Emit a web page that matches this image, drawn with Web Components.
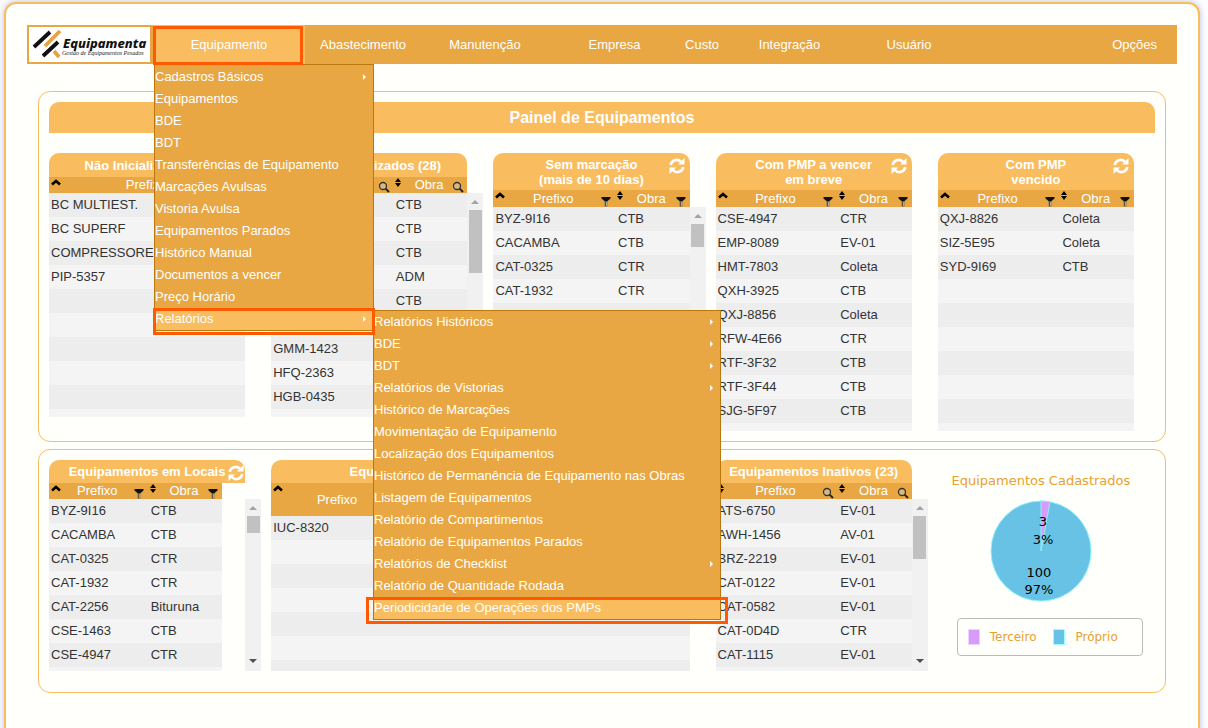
<!DOCTYPE html>
<html lang="pt-BR">
<head>
<meta charset="utf-8">
<title>Equipamenta - Painel de Equipamentos</title>
<style>
  html { height: 100%; overflow: hidden; background: #fdfdff; }
  body { margin: 0; height: 100%; font: 13px/16px "Liberation Sans", Arial, sans-serif; color: #333;
    --bar: #e8a743; --light: #f9bd60; --paper: #fffffb; --mark: #ff5a00; --edge: #ba770c; }
</style>
</head>
<body>
<app-frame>
  <main-menu slot="menu"></main-menu>
  <panel-box>
    <h1 slot="title">Painel de Equipamentos</h1>
    <data-grid source="naoInicializados"></data-grid>
    <data-grid source="naoSincronizados"></data-grid>
    <data-grid source="semMarcacao"></data-grid>
    <data-grid source="pmpAVencer"></data-grid>
    <data-grid source="pmpVencido"></data-grid>
  </panel-box>
  <panel-box class="lower">
    <data-grid source="emLocais"></data-grid>
    <data-grid source="permanencia" class="wide"></data-grid>
    <data-grid source="inativos"></data-grid>
    <pie-chart></pie-chart>
  </panel-box>
</app-frame>

<script>
const menus = {
  equipamento: [['Cadastros Básicos', 'more'], ['Equipamentos'], ['BDE'], ['BDT'], ['Transferências de Equipamento'],
    ['Marcações Avulsas'], ['Vistoria Avulsa'], ['Equipamentos Parados'], ['Histórico Manual'], ['Documentos a vencer'],
    ['Preço Horário'], ['Relatórios', 'more on open']],
  relatorios: [['Relatórios Históricos', 'more'], ['BDE', 'more'], ['BDT', 'more'], ['Relatórios de Vistorias', 'more'],
    ['Histórico de Marcações'], ['Movimentação de Equipamento'], ['Localização dos Equipamentos'],
    ['Histórico de Permanência de Equipamento nas Obras'], ['Listagem de Equipamentos'], ['Relatório de Compartimentos'],
    ['Relatório de Equipamentos Parados'], ['Relatórios de Checklist', 'more'], ['Relatório de Quantidade Rodada'],
    ['Periodicidade de Operações dos PMPs', 'on']]
};

const grids = {
  naoInicializados: { title: 'Não Inicializados (4)', icon: 'search', cols: [['Prefixo', 196]],
    rows: [['BC MULTIEST.'], ['BC SUPERF'], ['COMPRESSORE'], ['PIP-5357']] },
  naoSincronizados: { title: 'Não Sincronizados (28)', icon: 'search', cols: [['', 122], ['Obra', 74]], thumb: 63,
    rows: [['', 'CTB'], ['', 'CTB'], ['', 'CTB'], ['', 'ADM'], ['', 'CTB'], [], ['GMM-1423'], ['HFQ-2363'], ['HGB-0435']] },
  semMarcacao: { title: 'Sem marcação<br>(mais de 10 dias)', kind: 'tall', refresh: true, icon: 'filter', thumb: 23,
    cols: [['Prefixo', 122], ['Obra', 74]],
    rows: [['BYZ-9I16', 'CTB'], ['CACAMBA', 'CTB'], ['CAT-0325', 'CTR'], ['CAT-1932', 'CTR']] },
  pmpAVencer: { title: 'Com PMP a vencer<br>em breve', kind: 'tall', refresh: true, icon: 'filter',
    cols: [['Prefixo', 122], ['Obra', 74]],
    rows: [['CSE-4947', 'CTR'], ['EMP-8089', 'EV-01'], ['HMT-7803', 'Coleta'], ['QXH-3925', 'CTB'], ['QXJ-8856', 'Coleta'],
      ['RFW-4E66', 'CTR'], ['RTF-3F32', 'CTB'], ['RTF-3F44', 'CTB'], ['SJG-5F97', 'CTB']] },
  pmpVencido: { title: 'Com PMP<br>vencido', kind: 'tall', refresh: true, icon: 'filter',
    cols: [['Prefixo', 122], ['Obra', 74]],
    rows: [['QXJ-8826', 'Coleta'], ['SIZ-5E95', 'Coleta'], ['SYD-9I69', 'CTB']] },
  emLocais: { title: 'Equipamentos em Locais', kind: 'low', refresh: true, icon: 'filter', full: 196, thumb: 17,
    cols: [['Prefixo', 99], ['Obra', 74]],
    rows: [['BYZ-9I16', 'CTB'], ['CACAMBA', 'CTB'], ['CAT-0325', 'CTR'], ['CAT-1932', 'CTR'], ['CAT-2256', 'Bituruna'],
      ['CSE-1463', 'CTB'], ['CSE-4947', 'CTR']] },
  permanencia: { title: 'Equipamentos com Permanência a Vencer', kind: 'low', icon: 'filter',
    cols: [['Prefixo', 132], ['', 143], ['', 143]], rows: [['IUC-8320']] },
  inativos: { title: 'Equipamentos Inativos (23)', kind: 'low', icon: 'search', unsorted: true, thumb: 43,
    cols: [['Prefixo', 122], ['Obra', 74]],
    rows: [['ATS-6750', 'EV-01'], ['AWH-1456', 'AV-01'], ['BRZ-2219', 'EV-01'], ['CAT-0122', 'EV-01'], ['CAT-0582', 'EV-01'],
      ['CAT-0D4D', 'CTR'], ['CAT-1115', 'EV-01']] }
};

const define = (name, html, setup) => {
  const tpl = document.createElement('template');
  tpl.innerHTML = html;
  customElements.define(name, class extends HTMLElement {
    constructor() {
      super();
      this.attachShadow({ mode: 'open' }).append(tpl.content.cloneNode(true));
    }
    connectedCallback() { if (setup && !this.ready) { this.ready = true; setup(this, this.shadowRoot); } }
  });
};

const icons = {
  up: '<svg width="12" height="9" viewBox="0 0 12 9"><path d="M2 7.500 6 4l4 3.500" fill="none" stroke="#000" stroke-width="2.600"/></svg>',
  both: '<svg width="8" height="11" viewBox="0 0 8 11"><path d="M4 1 7 5H1zM4 10 1 6h6z"/></svg>',
  filter: '<svg width="12" height="12" viewBox="0 0 12 12"><path d="M1.500 2h9v1.500L7 6.500H5L1.500 3.500z" fill="#111"/><path d="M6 6v5.500" stroke="#555" stroke-width="2.600"/><path d="M6.500 7v4" stroke="#bbb" stroke-width=".8"/></svg>',
  search: '<svg width="12" height="12" viewBox="0 0 12 12"><circle cx="5" cy="5" r="3.500" fill="#d9b982" stroke="#333" stroke-width="1.300"/><path d="m7.600 7.600 3.400 3.400" stroke="#222" stroke-width="1.900"/></svg>',
  refresh: '<svg width="16" height="16" viewBox="0 0 16 16" fill="none" stroke="#fff" stroke-width="2.600"><path d="M1.700 7A6 6 0 0 1 12 3.800"/><path d="M14.300 9A6 6 0 0 1 4 12.200"/><path d="M15.500 0v6.500H9zM.5 16V9.500H7z" fill="#fff" stroke="none"/></svg>'
};

define('app-frame', `
<style>
  :host { display: block; padding: 2px 8px 0 4px; }
  .frame { box-sizing: border-box; min-height: 740px; padding: 21px 0; border: 2px solid var(--light);
    border-radius: 12px; background: var(--paper); box-shadow: 0 0 6px #b4bfd8; }
  ::slotted(main-menu) { margin: 0 21px; }
  main { display: flex; flex-direction: column; gap: 7px; margin: 27px 32px 0; }
</style>
<div class="frame"><slot name="menu"></slot><main><slot></slot></main></div>`);

define('brand-logo', `
<style>
  :host { display: block; box-sizing: border-box; border: 2px solid var(--bar); border-right-width: 3px; background: #fff; }
  svg { display: block; }
</style>
<svg width="121" height="35" viewBox="0 0 121 35" role="img" aria-label="Equipamenta">
  <g fill="none" stroke-width="3.800">
    <path d="M5 20 21 5M14 29 29 15" stroke="#111"/>
    <path d="m16 19 15-15M25 24l5 6" stroke="#e8a243"/>
  </g>
  <text x="34" y="21" font-family="'Noto Sans', sans-serif" font-size="13" font-weight="800" font-style="italic" fill="#111">Equipamenta</text>
  <text x="33" y="28" font-family="'Liberation Serif', serif" font-size="6" font-style="italic" fill="#222">Gestão de Equipamentos Pesados</text>
</svg>`);

define('menu-list', `
<style>
  :host { display: block; box-sizing: border-box; border: 1px solid var(--edge); background: var(--bar); text-align: left; }
  :host([source="equipamento"]) { padding-top: 1px; }
  ul { margin: 0; padding: 0; list-style: none; }
  li { position: relative; }
  a { display: flex; align-items: center; justify-content: space-between; height: 22px; padding-right: 7px;
    color: #fff; text-decoration: none; white-space: nowrap; }
  .on { background: var(--light); }
  .more::after { content: ""; border: 3px solid transparent; border-left-color: #fff; border-right: 0; }
  .mark { position: absolute; inset: 0 -2px -5px -2px; border: 3px solid var(--mark); z-index: 2; pointer-events: none; }
  :host([source="relatorios"]) .mark { inset: 0 -8px -5px -8px; }
  .last menu-list { position: absolute; left: 100%; top: 2px; width: 348px; z-index: 1; }
</style>
<ul></ul>`, (host, root) => {
  const items = menus[host.getAttribute('source')];
  root.querySelector('ul').innerHTML = items.map(([label, flags = '']) => {
    const on = flags.includes('on');
    return `<li class="${on ? 'last' : ''}"><a href="#" class="${flags}">${label}</a>` +
      (on ? '<span class="mark"></span>' : '') +
      (flags.includes('open') ? '<menu-list source="relatorios"></menu-list>' : '') + '</li>';
  }).join('');
});

define('main-menu', `
<style>
  :host { display: grid; grid-template-columns: 126fr 152fr 116fr 128fr 131fr 44fr 131fr 108fr 214fr;
    height: 39px; background: var(--bar); position: relative; z-index: 5; }
  .item { position: relative; display: flex; align-items: center; justify-content: center; }
  .item > a { color: #fff; text-decoration: none; }
  .current { background: var(--light); }
  .item:last-child { justify-content: flex-end; padding-right: 20px; }
  .mark { position: absolute; inset: 1px 2px -1px 0; border: 3px solid var(--mark); z-index: 2; }
  menu-list { position: absolute; left: 1px; top: 100%; width: 220px; }
</style>
<brand-logo></brand-logo>
<div class="item current"><a href="#">Equipamento</a><span class="mark"></span><menu-list source="equipamento"></menu-list></div>
<div class="item"><a href="#">Abastecimento</a></div>
<div class="item"><a href="#">Manutenção</a></div>
<div class="item"><a href="#">Empresa</a></div>
<div class="item"><a href="#">Custo</a></div>
<div class="item"><a href="#">Integração</a></div>
<div class="item"><a href="#">Usuário</a></div>
<div class="item"><a href="#">Opções</a></div>`);

define('panel-box', `
<style>
  :host { display: block; border: 1px solid var(--light); border-radius: 12px; padding: 10px; }
  :host(.lower) { padding-bottom: 21px; }
  ::slotted(h1) { margin: 0 0 20px; border-radius: 10px 10px 0 0; background: var(--light); color: #fff;
    font-size: 16px; line-height: 31px; text-align: center; }
  .grid { display: grid; grid-template-columns: repeat(5, minmax(0, 1fr)); column-gap: 26px; padding-right: 21px; }
  ::slotted(.wide) { grid-column: span 2; }
  ::slotted(pie-chart) { margin-right: -10px; }
</style>
<slot name="title"></slot><div class="grid"><slot></slot></div>`);

define('data-grid', `
<style>
  :host { display: block; --head: 16px; --body: 224px; }
  header { position: relative; display: flex; align-items: center; justify-content: center; height: 24px;
    background: var(--light); border-radius: 10px 10px 0 0; }
  h2 { margin: 0; color: #fff; font-size: 13px; line-height: 15px; text-align: center; white-space: nowrap; }
  button { display: block; margin: 0; padding: 0; border: 0; background: none; }
  svg { display: block; }
  header button { position: absolute; right: 5px; top: 5px; }
  .area { display: grid; grid-template-columns: 100% 16px; }
  .clip { height: calc(var(--head) + var(--body)); overflow: hidden; }
  table { width: 100%; table-layout: fixed; border-collapse: collapse; }
  th { height: var(--head); padding: 0; background: var(--bar); color: #fff; font-weight: normal; }
  th div { display: grid; grid-template-columns: 12px 1fr 12px; align-items: center; height: var(--head); padding: 0 3px 0 1px; line-height: 16px; }
  th .sort { align-self: start; }
  th button { align-self: end; }
  td { height: 24px; padding: 0 0 0 3px; white-space: nowrap; }
  td:first-child { padding-left: 2px; }
  tbody tr { background: #f4f4f4; }
  tbody tr:nth-child(odd) { background: #ededed; }
  .scroll { display: flex; flex-direction: column; align-items: center; margin-top: var(--head); height: var(--body);
    background: #f1f1f1; }
  .scroll::before, .scroll::after { content: ""; border: 4px solid transparent; }
  .scroll::before { border-bottom-color: #a3a3a3; border-top: 0; margin: 7px 0 6px; }
  .scroll::after { border-top-color: #505050; border-bottom: 0; margin: auto 0 8px; }
  .thumb { width: 13px; background: #c1c1c1; }
  :host(.tall) { --head: 17px; }
  :host(.tall) header { height: 37px; }
  :host(.low) { --body: 172px; }
  :host(.low) header { height: 23px; }
  :host(.low) header button { right: 1px; }
  :host(.wide) { --head: 33px; --body: 155px; }
  :host(.wide) th button { visibility: hidden; }
</style>
<header><h2></h2></header>
<div class="area"><div class="clip"><table><thead><tr></tr></thead><tbody></tbody></table></div></div>`, (host, root) => {
  const g = grids[host.getAttribute('source')];
  if (g.kind) host.classList.add(g.kind);
  root.querySelector('h2').innerHTML = g.title;
  if (g.refresh) root.querySelector('header').insertAdjacentHTML('beforeend', `<button aria-label="Atualizar">${icons.refresh}</button>`);
  const used = g.cols.reduce((s, c) => s + c[1], 0);
  root.querySelector('table').style.width = 100 * used / (g.full || used) + '%';
  root.querySelector('thead tr').innerHTML = g.cols.map(([name, w], i) =>
    `<th scope="col" style="width:${Math.round(100 * w / used)}%"><div><span class="sort">${icons[i || g.unsorted ? 'both' : 'up']}</span><span>${name}</span>` +
    `<button aria-label="Filtrar ${name}">${icons[g.icon]}</button></div></th>`).join('');
  root.querySelector('tbody').innerHTML = Array.from({ length: 10 }, (_, r) =>
    '<tr>' + g.cols.map((_, c) => `<td>${(g.rows[r] || [])[c] || ''}</td>`).join('') + '</tr>').join('');
  if (g.thumb) root.querySelector('.area').insertAdjacentHTML('beforeend', `<div class="scroll"><div class="thumb" style="height:${g.thumb}px"></div></div>`);
});

define('pie-chart', `
<style>
  :host { display: block; font-family: "DejaVu Sans", Verdana, sans-serif; color: #e8a02e; }
  figure { margin: 0; display: flex; flex-direction: column; align-items: center; }
  figcaption { padding: 12px 0 11px; line-height: 17px; white-space: nowrap; }
  svg { display: block; }
  .legend { align-self: stretch; display: flex; align-items: center; margin: 16px 1px 0 19px; height: 36px; padding-left: 10px;
    border: 1px solid #bbb; border-radius: 4px; font-size: 12px; }
  i { box-sizing: border-box; width: 12px; height: 16px; margin-right: 10px; background: #d99bf9; border: 1px solid #f0d0ff; }
  span { margin-right: 17px; }
  i.own { background: #67c2e6; border-color: #9ff; }
</style>
<figure>
  <figcaption>Equipamentos Cadastrados</figcaption>
  <svg width="102" height="102" viewBox="0 0 102 102" font-size="13" text-anchor="middle" fill="#000">
    <circle cx="51" cy="51" r="50" fill="#67c2e6" stroke="#8cf3fb"/>
    <path d="M51 51V1a50 50 0 0 1 9 .8z" fill="#d99bf9" stroke="#8cf3fb"/>
    <text x="53" y="26">3</text><text x="53" y="44">3%</text>
    <text x="49" y="77">100</text><text x="49" y="94">97%</text>
  </svg>
  <div class="legend"><i></i><span>Terceiro</span><i class="own"></i><span>Próprio</span></div>
</figure>`);
</script>
</body>
</html>
